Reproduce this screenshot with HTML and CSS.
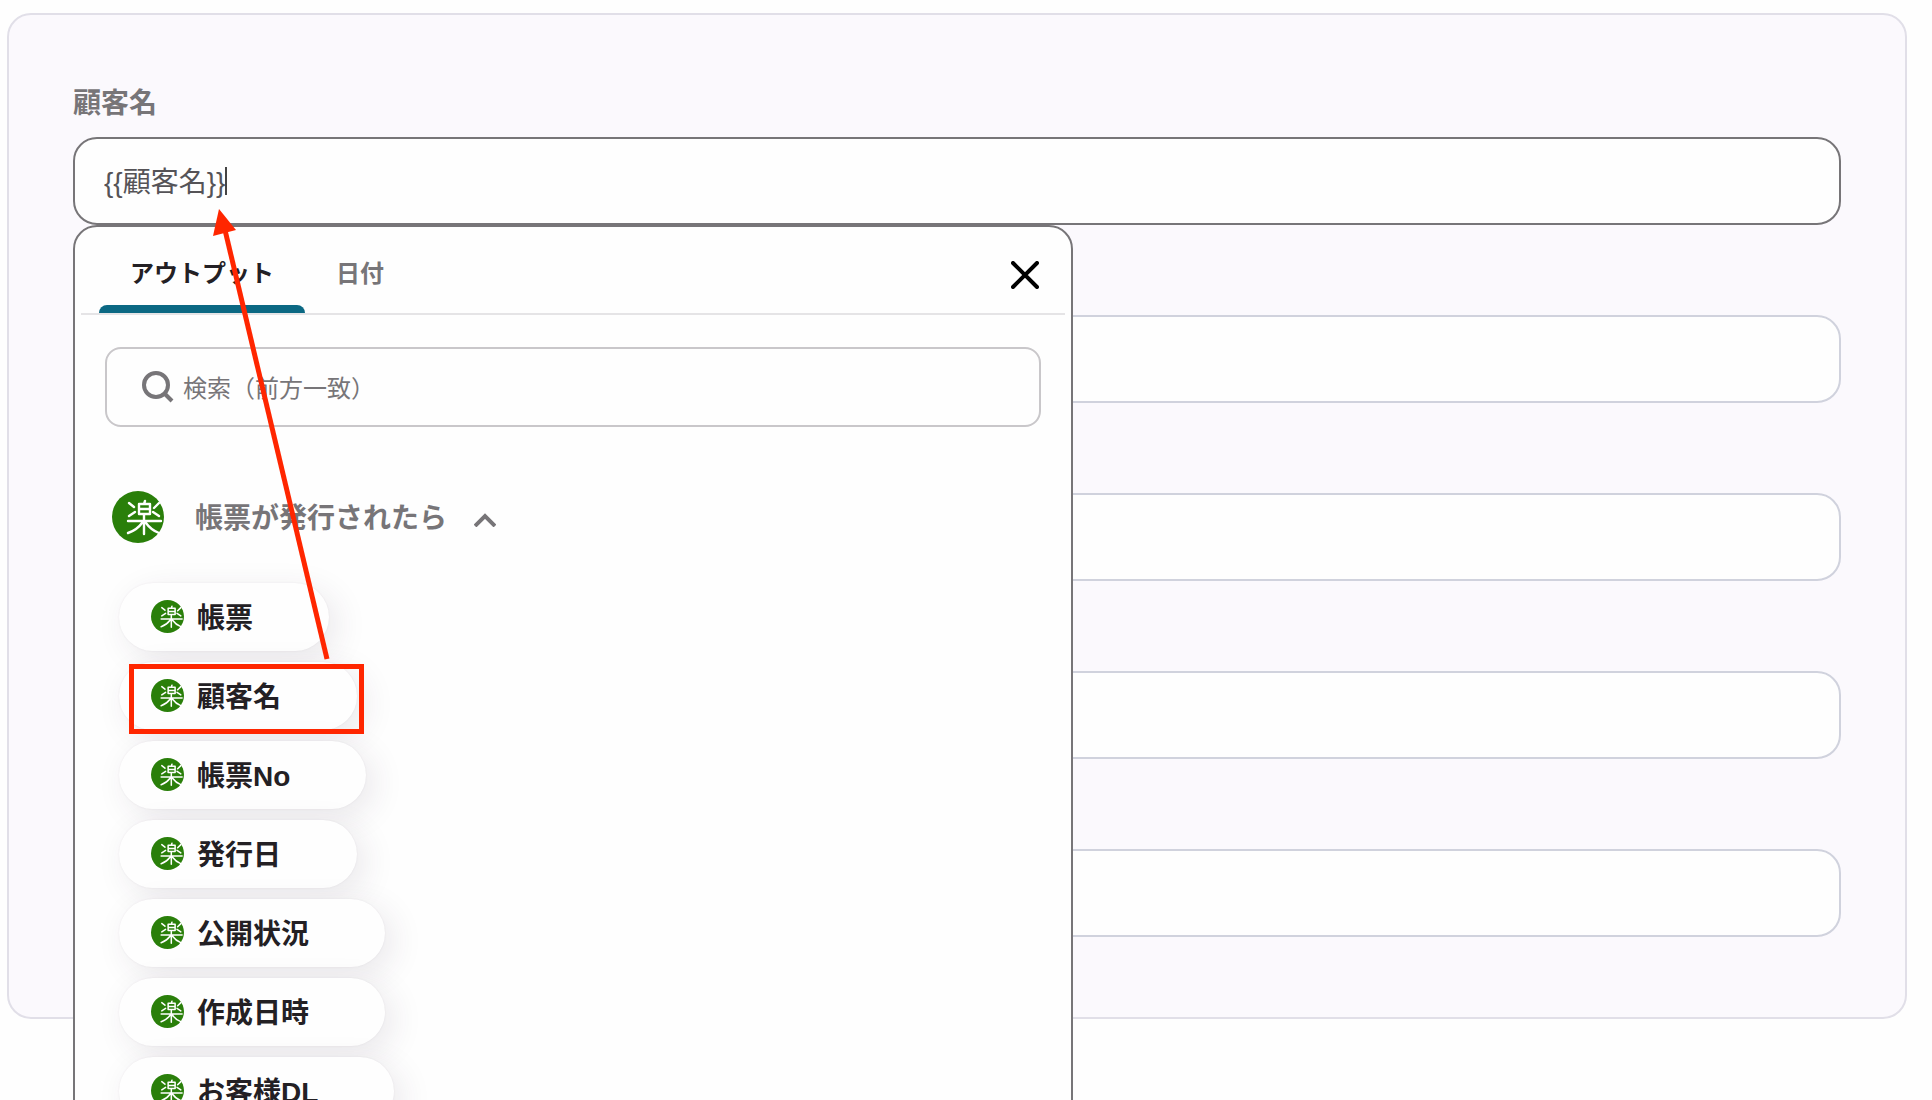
FILE: index.html
```html
<!DOCTYPE html>
<html lang="ja">
<head>
    <meta charset="UTF-8">
    <meta name="viewport" content="width=device-width, initial-scale=1.0">
    <title>アウトプット選択</title>
    <link rel="stylesheet" href="styles.css">
</head>
<body>
    <svg class="defs" width="0" height="0" aria-hidden="true">
        <symbol id="raku" viewBox="0 0 52 52">
            <circle cx="26" cy="26" r="26" fill="#2a7f0a"/>
            <g fill="none" stroke="#fff" stroke-width="2.400" stroke-linecap="round" stroke-linejoin="round">
                <path d="M33 10l-1 3M27 13h11v10H27zM27 18h11"/>
                <path d="M17 12l5 4M17 25l6-4M47 12l-5 5M41 21l6 4"/>
                <path d="M16 30h33M32 24v19M30 32q-5 7-14 10M34 32q5 7 13 10"/>
            </g>
        </symbol>
    </svg>

    <main class="panel">
        <form class="form">
            <div class="field">
                <label class="field-label" for="customer">顧客名</label>
                <div class="input-wrap">
                    <input class="input input-active" type="text" id="customer" value="{{顧客名}}">
                    <span class="caret"></span>
                </div>

                <section class="popover">
                    <div class="tabs" role="tablist">
                        <button class="tab active" type="button" role="tab" aria-selected="true">アウトプット</button>
                        <button class="tab" type="button" role="tab" aria-selected="false">日付</button>
                        <button class="close" type="button" aria-label="閉じる">
                            <svg width="28" height="28" viewBox="0 0 28 28" fill="none" stroke="#000" stroke-width="4" stroke-linecap="round"><path d="M2 2l24 24M26 2L2 26"/></svg>
                        </button>
                    </div>

                    <div class="popover-body">
                        <div class="search">
                            <svg width="32" height="32" viewBox="0 0 32 32" fill="none" stroke="#777578" stroke-width="4"><circle cx="14" cy="14" r="12"/><path d="M22 22l8 8"/></svg>
                            <input class="search-input" type="text" placeholder="検索（前方一致）" aria-label="検索（前方一致）">
                        </div>

                        <button class="group" type="button" aria-expanded="true">
                            <svg class="group-icon"><use href="#raku"/></svg>
                            <span class="group-name">帳票が発行されたら</span>
                            <svg class="chevron" width="22" height="14" viewBox="0 0 22 14" fill="none" stroke="#777578" stroke-width="4"><path d="M1 13L11 3l10 10"/></svg>
                        </button>

                        <div class="outputs">
                            <button class="pill" type="button"><svg class="pill-icon"><use href="#raku"/></svg>帳票</button>
                            <button class="pill" type="button"><svg class="pill-icon"><use href="#raku"/></svg>顧客名</button>
                            <button class="pill" type="button"><svg class="pill-icon"><use href="#raku"/></svg>帳票No</button>
                            <button class="pill" type="button"><svg class="pill-icon"><use href="#raku"/></svg>発行日</button>
                            <button class="pill" type="button"><svg class="pill-icon"><use href="#raku"/></svg>公開状況</button>
                            <button class="pill" type="button"><svg class="pill-icon"><use href="#raku"/></svg>作成日時</button>
                            <button class="pill" type="button"><svg class="pill-icon"><use href="#raku"/></svg>お客様DL</button>
                        </div>
                    </div>
                </section>
            </div>

            <input class="input" type="text" aria-label="項目2">
            <input class="input" type="text" aria-label="項目3">
            <input class="input" type="text" aria-label="項目4">
            <input class="input" type="text" aria-label="項目5">
        </form>
    </main>

    <!-- annotation: output item -> input -->
    <svg class="annotation" width="400" height="760" viewBox="0 0 400 760" aria-hidden="true">
        <path d="M327 659L225 230" fill="none" stroke="#ff2600" stroke-width="5"/>
        <path d="M219 209l17 21-23 6z" fill="#ff2600"/>
        <rect x="131.500" y="666.500" width="230" height="65" fill="none" stroke="#ff2600" stroke-width="5"/>
    </svg>
</body>
</html>
```
FILE: styles.css
```css
* {
    box-sizing: border-box;
}
body {
    position: relative;
    height: 100vh;
    margin: 0;
    padding: 13px 25px 0 7px;
    overflow: hidden;
    background: #fefefe;
    color: #232024;
    font-family: "Liberation Sans", "Noto Sans CJK JP", sans-serif;
}
button, input {
    font-family: inherit;
    color: inherit;
}
button {
    border: none;
    background: none;
    padding: 0;
    cursor: pointer;
}
.defs {
    position: absolute;
}
.panel {
    padding: 64px 64px 80px;
    border: 2px solid #e1dfe8;
    border-radius: 24px;
    background: #fbf9fd;
}
.form {
    display: flex;
    flex-direction: column;
    gap: 90px;
}
.field {
    position: relative;
}
.field-label {
    display: block;
    padding-top: 4px;
    margin-bottom: 12px;
    font-size: 28px;
    line-height: 42px;
    font-weight: bold;
    color: #777578;
}
.input-wrap {
    position: relative;
}
.input {
    display: block;
    width: 100%;
    height: 88px;
    padding: 0 29px 2px;
    border: 2px solid #d0d2dd;
    border-radius: 24px;
    background: #fefefe;
    color: #555357;
    font-size: 28px;
    outline: none;
}
.input-active {
    border-color: #777578;
}
.caret {
    position: absolute;
    left: 152px;
    top: 30px;
    width: 2px;
    height: 28px;
    background: #444;
}

/* output picker */
.popover {
    position: absolute;
    top: 100%;
    left: 0;
    z-index: 1;
    width: 1000px;
    max-width: 100%;
    padding: 0 6px 40px;
    border: 2px solid #777578;
    border-radius: 24px;
    background: #fefefe;
}
.tabs {
    display: flex;
    align-items: stretch;
    height: 88px;
    padding: 0 26px 0 18px;
    border-bottom: 2px solid #e5e4e6;
}
.tab {
    position: relative;
    padding: 2px 31px 0;
    font-size: 24px;
    font-weight: bold;
    color: #777578;
}
.tab.active {
    color: #232024;
}
.tab.active::after {
    content: "";
    position: absolute;
    left: 0;
    right: 0;
    bottom: 0;
    height: 8px;
    border-radius: 8px 8px 0 0;
    background: #0b6883;
}
.close {
    margin-left: auto;
    padding-top: 12px;
}
.popover-body {
    padding: 32px 24px;
}
.search {
    display: flex;
    align-items: center;
    gap: 9px;
    height: 80px;
    padding: 0 35px;
    border: 2px solid #c9c7ca;
    border-radius: 16px;
}
.search-input {
    flex: 1;
    padding: 4px 0 0;
    border: none;
    outline: none;
    background: none;
    font-size: 24px;
}
.search-input::placeholder {
    color: #777578;
    opacity: 1;
}
.group {
    display: flex;
    align-items: center;
    height: 52px;
    margin: 64px 0 40px 7px;
    font-size: 28px;
    font-weight: bold;
    color: #777578;
}
.group-icon {
    width: 52px;
    height: 52px;
    margin-right: 31px;
}
.group-name {
    padding-bottom: 2px;
}
.chevron {
    margin: 6px 0 0 27px;
}
.outputs {
    display: flex;
    flex-direction: column;
    align-items: flex-start;
    gap: 11px;
    padding-left: 14px;
}
.pill {
    display: flex;
    align-items: center;
    height: 68px;
    padding: 0 76px 2px 32px;
    border-radius: 34px;
    background: #fefefe;
    box-shadow: 0 0 2px rgba(60, 40, 70, 0.08), 8px 8px 32px rgba(60, 40, 70, 0.1);
    font-size: 28px;
    font-weight: bold;
}
.pill-icon {
    width: 33px;
    height: 33px;
    margin-right: 13px;
}

.annotation {
    position: absolute;
    top: 0;
    left: 0;
    z-index: 2;
    pointer-events: none;
}
```
